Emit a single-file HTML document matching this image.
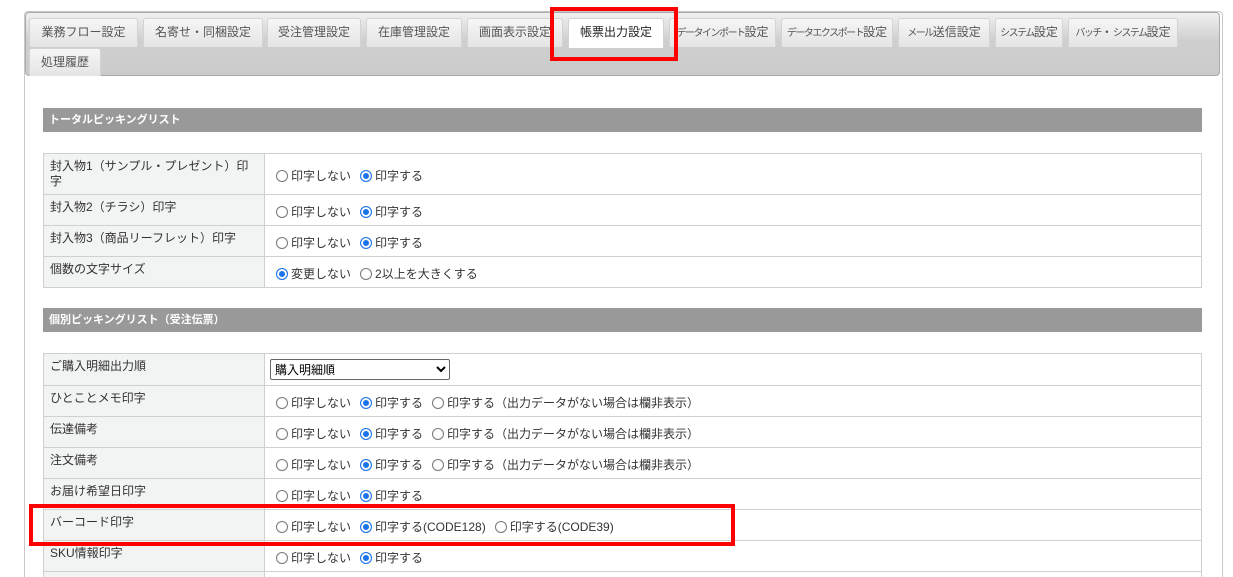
<!DOCTYPE html>
<html><head><meta charset="utf-8"><style>
*{box-sizing:border-box;margin:0;padding:0}
html,body{width:1233px;height:577px;overflow:hidden}
body{background:#fff;font-family:"Liberation Sans","Noto Sans CJK JP",sans-serif;font-size:12px;color:#333;position:relative}
.a{position:absolute}
.wrap{left:24px;top:11px;width:1199px;height:566px;border:1px solid #c8c8c8;border-bottom:none;border-radius:4px 4px 0 0}
.bar{left:25px;top:12px;width:1195px;height:64px;background:linear-gradient(#f0f0f0,#cfcfcf 45%,#cbcbcb);border:1px solid #aaa;border-radius:4px}
.tab{position:absolute;height:29px;background:linear-gradient(#f6f6f6,#e4e4e4);border:1px solid #d3d3d3;border-bottom:none;border-radius:3px 3px 0 0;text-align:center;line-height:27px;color:#555;font-size:12px;white-space:nowrap;overflow:hidden}
.tab.on{background:#fff;color:#222}
.sm{font-size:10px;letter-spacing:-1.5px}
.hd{left:43px;width:1159px;height:24px;background:#999;color:#fff;font-weight:bold;font-size:11px;line-height:24px;padding-left:6px}
.row{position:absolute;left:43px;width:1159px;border:1px solid #d0d0d0;border-top:none}
.row .l{position:absolute;left:0;top:0;bottom:0;width:221px;background:#f2f3f3;border-right:1px solid #d0d0d0;padding:5px 0 0 6px;line-height:15px}
.row .v{position:absolute;left:232px;top:0;bottom:0;display:flex;align-items:center;padding-top:3px;white-space:nowrap}
.r{display:inline-block;width:12px;height:12px;border:1px solid #777;border-radius:50%;margin:0 3px 0 0;vertical-align:middle;position:relative}
.r.c{border:1px solid #1a73e8;background:#1a73e8;box-shadow:inset 0 0 0 2px #fff}
.gap{display:inline-block;width:9px}
.red{border:4px solid #f00;position:absolute}
select{position:absolute}
</style></head><body>
<div class="a wrap"></div>
<div class="a bar"></div>
<div class="tab" style="left:29px;top:18px;width:109px">業務フロー設定</div>
<div class="tab" style="left:143px;top:18px;width:120px">名寄せ・同梱設定</div>
<div class="tab" style="left:267px;top:18px;width:94px">受注管理設定</div>
<div class="tab" style="left:366px;top:18px;width:96px">在庫管理設定</div>
<div class="tab" style="left:467px;top:18px;width:96px">画面表示設定</div>
<div class="tab on" style="left:568px;top:18px;width:96px;height:30px">帳票出力設定</div>
<div class="tab" style="left:669px;top:18px;width:107px"><span class="sm">データインポート</span>設定</div>
<div class="tab" style="left:781px;top:18px;width:112px"><span class="sm">データエクスポート</span>設定</div>
<div class="tab" style="left:898px;top:18px;width:92px"><span class="sm">メール</span>送信設定</div>
<div class="tab" style="left:995px;top:18px;width:68px"><span class="sm">システム</span>設定</div>
<div class="tab" style="left:1068px;top:18px;width:110px"><span class="sm">バッチ</span>・<span class="sm">システム</span>設定</div>
<div class="tab" style="left:29px;top:48px;width:72px;height:28px">処理履歴</div>
<div class="red" style="left:550px;top:7px;width:128px;height:54px"></div>

<div class="a hd" style="top:108px">トータルピッキングリスト</div>
<div class="row" style="top:153px;height:42px;border-top:1px solid #d0d0d0"><div class="l">封入物1（サンプル・プレゼント）印<br>字</div><div class="v"><span class="r"></span>印字しない<span class="gap"></span><span class="r c"></span>印字する</div></div>
<div class="row" style="top:195px;height:31px"><div class="l">封入物2（チラシ）印字</div><div class="v"><span class="r"></span>印字しない<span class="gap"></span><span class="r c"></span>印字する</div></div>
<div class="row" style="top:226px;height:31px"><div class="l">封入物3（商品リーフレット）印字</div><div class="v"><span class="r"></span>印字しない<span class="gap"></span><span class="r c"></span>印字する</div></div>
<div class="row" style="top:257px;height:31px"><div class="l">個数の文字サイズ</div><div class="v"><span class="r c"></span>変更しない<span class="gap"></span><span class="r"></span>2以上を大きくする</div></div>

<div class="a hd" style="top:308px">個別ピッキングリスト（受注伝票）</div>
<div class="row" style="top:353px;height:33px;border-top:1px solid #d0d0d0"><div class="l">ご購入明細出力順</div></div>
<select style="left:270px;top:359px;width:180px;height:21px;font-size:12px;font-family:inherit;border:1px solid #666;border-radius:2px;background:#fff"><option>購入明細順</option></select>
<div class="row" style="top:386px;height:31px"><div class="l">ひとことメモ印字</div><div class="v"><span class="r"></span>印字しない<span class="gap"></span><span class="r c"></span>印字する<span class="gap"></span><span class="r"></span>印字する（出力データがない場合は欄非表示）</div></div>
<div class="row" style="top:417px;height:31px"><div class="l">伝達備考</div><div class="v"><span class="r"></span>印字しない<span class="gap"></span><span class="r c"></span>印字する<span class="gap"></span><span class="r"></span>印字する（出力データがない場合は欄非表示）</div></div>
<div class="row" style="top:448px;height:31px"><div class="l">注文備考</div><div class="v"><span class="r"></span>印字しない<span class="gap"></span><span class="r c"></span>印字する<span class="gap"></span><span class="r"></span>印字する（出力データがない場合は欄非表示）</div></div>
<div class="row" style="top:479px;height:31px"><div class="l">お届け希望日印字</div><div class="v"><span class="r"></span>印字しない<span class="gap"></span><span class="r c"></span>印字する</div></div>
<div class="row" style="top:510px;height:31px"><div class="l">バーコード印字</div><div class="v"><span class="r"></span>印字しない<span class="gap"></span><span class="r c"></span>印字する(CODE128)<span class="gap"></span><span class="r"></span>印字する(CODE39)</div></div>
<div class="row" style="top:541px;height:31px"><div class="l">SKU情報印字</div><div class="v"><span class="r"></span>印字しない<span class="gap"></span><span class="r c"></span>印字する</div></div>
<div class="row" style="top:572px;height:5px;border-bottom:none"><div class="l" style="padding:0"></div></div>
<div class="red" style="left:29px;top:504px;width:706px;height:42px"></div>
</body></html>
